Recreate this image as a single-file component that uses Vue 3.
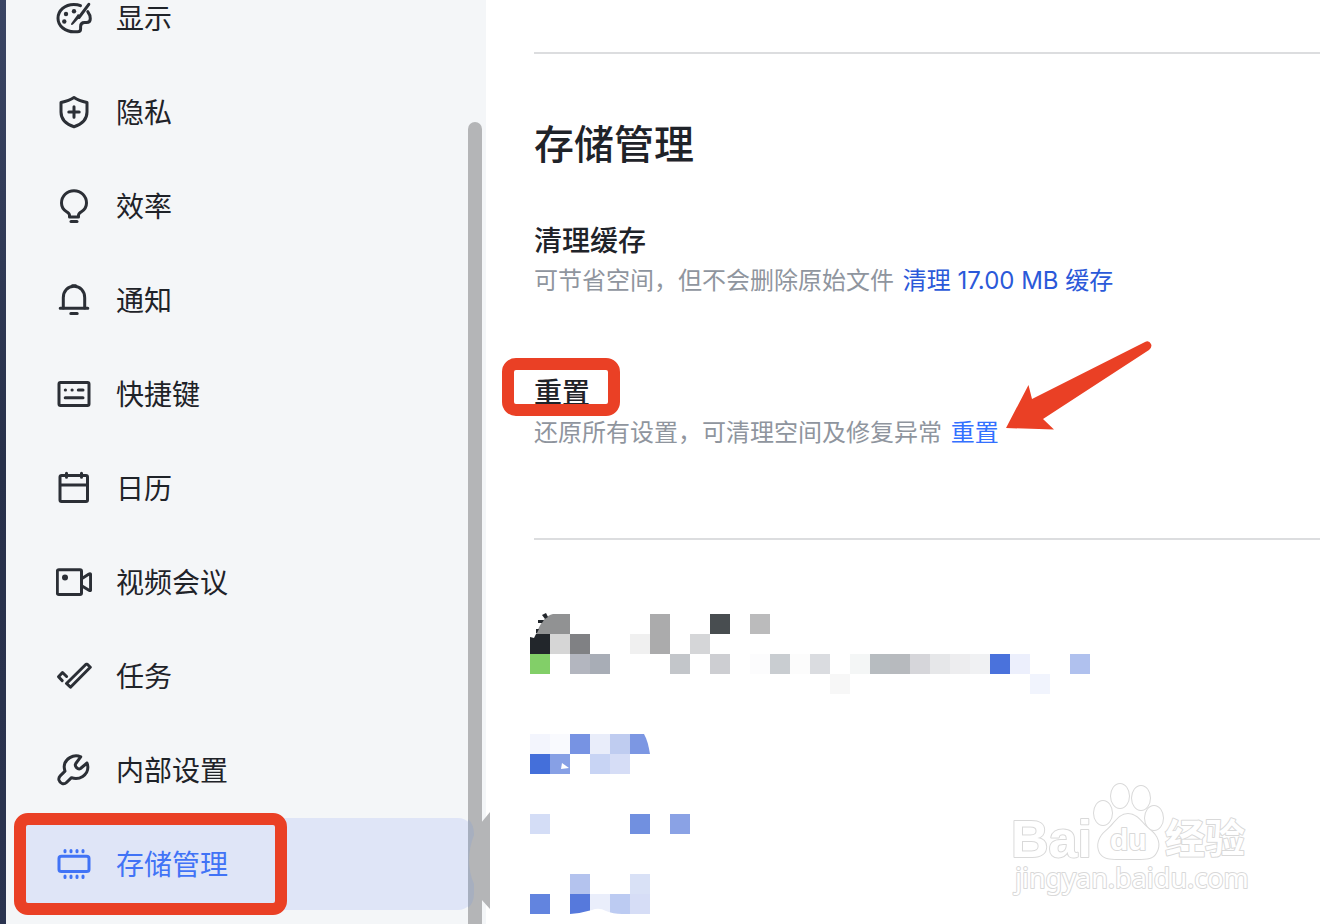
<script setup>
import { ref } from "vue";

const active = ref("storage");

const menu = [
    { id: "display", label: "显示" },
    { id: "privacy", label: "隐私" },
    { id: "efficiency", label: "效率" },
    { id: "notify", label: "通知" },
    { id: "shortcut", label: "快捷键" },
    { id: "calendar", label: "日历" },
    { id: "meeting", label: "视频会议" },
    { id: "task", label: "任务" },
    { id: "internal", label: "内部设置" },
    { id: "storage", label: "存储管理" }
];

// stroke paths, drawn on a 36x36 grid
const icons = {
    display: [
        "M24.5 5.6C22.4 4.7 20 4.4 17.8 4.4C9 4.4 2 10.600 2 18.200C2 26.200 9.500 31.800 18 31.800H21.500C23.600 31.800 24.600 30.600 24.600 29V26.500C24.600 23.800 26 22.500 28.500 22.500H30.500C33 22.500 34.300 21 34.300 18.800C34.300 16 33.400 13.700 31.800 11.700",
        "M32.800 4.300L23 17.500"
    ],
    privacy: ["M18 3.500C22 6.200 26.500 7.500 31 8.500V18C31 25 26 30.200 18 32.700C10 30.200 5 25 5 18V8.500C9.500 7.500 14 6.200 18 3.500Z", "M18 12.800V23.200M12.800 18H23.200"],
    efficiency: ["M13.500 29V27.200C13.500 25.600 12.500 24.800 10.600 23.700C7.300 21.700 5.500 18.800 5.500 15C5.500 8 11 2.700 18 2.700S30.500 8 30.500 15C30.500 18.800 28.700 21.700 25.400 23.700C23.500 24.800 22.500 25.600 22.500 27.200V29Z", "M15 33.500H21"],
    notify: ["M7.300 26V15.800C7.300 9 11.800 4.300 18 4.300S28.700 9 28.700 15.800V26", "M4.200 26.200H31.800M16.300 3.800H19.700M14.800 31.500H21.200"],
    shortcut: ["M4.500 6.500H31.500Q33 6.500 33 8V28Q33 29.500 31.500 29.500H4.500Q3 29.500 3 28V8Q3 6.500 4.500 6.500Z", "M9.300 14H9.500M16 14H16.200M22.300 14H27M9.200 21.800H27"],
    calendar: ["M5.500 5.600H30Q31.500 5.600 31.500 7V30Q31.500 31.500 30 31.500H5.500Q4 31.500 4 30V7Q4 5.600 5.500 5.600Z", "M4.500 14.900H31M10.500 3.300V7.300M25.500 3.300V7.300"],
    meeting: ["M2.800 5.800H24Q25.500 5.800 25.500 7.300V29Q25.500 30.500 24 30.500H2.800Q1.300 30.500 1.300 29V7.300Q1.300 5.800 2.800 5.800Z", "M26 14.500L33 10Q34.600 9.200 34.600 11V25.500Q34.600 27.200 33 26.300L26 22"],
    task: ["M31.300 6.300L34.300 9.300L14.500 29.200L10.500 25.500L30 6.300Z", "M6.200 22.600L2.500 18.800L6.500 14.500L10.600 18.500"],
    internal: ["M24.700 4.800C17.500 1.500 8.500 7 8.200 14.500C8.100 16.200 8.600 17.600 9 19.200L4.200 23.800C2.800 25.200 2.600 26.600 3 28.200C4 31.700 8 33 10.500 30.500L15.500 25.700C23 28.700 32.500 23 31.800 14.500C31.700 13.300 31.500 12.200 31 11L24.500 16.500C22 18 18 14.200 19.800 11.500Z"],
    storage: ["M5.500 10.300H30.500Q33 10.300 33 12.500V23.500Q33 25.500 30.500 25.500H5.500Q3 25.500 3 23.500V12.500Q3 10.300 5.500 10.300Z", "M9 4.500V5.800M15 4.500V5.800M21 4.500V5.800M27 4.500V5.800M9 30V31.500M15 30V31.500M21 30V31.500M27 30V31.500"]
};

// [column, row, colour] of the blurred-out blocks
const blocks = [
    [6, 0, "#ababac"], [9, 0, "#484d50"], [11, 0, "#bbbbbc"],
    [0, 1, "#22262b"], [1, 1, "#d6d6d6"], [2, 1, "#808184"], [5, 1, "#f0f0f0"], [6, 1, "#ababac"], [8, 1, "#d5d6d8"],
    [0, 2, "#82cf68"], [2, 2, "#b3b6bf"], [3, 2, "#a8adb6"], [7, 2, "#c3c6ca"], [9, 2, "#cdced2"], [11, 2, "#fcfcfd"],
    [12, 2, "#c9cdd1"], [13, 2, "#fcfcfc"], [14, 2, "#dadce0"], [16, 2, "#f4f6f6"], [17, 2, "#b7bcc0"], [18, 2, "#b7babe"],
    [19, 2, "#d6d6da"], [20, 2, "#e6e7e9"], [21, 2, "#ededef"], [22, 2, "#f0f1f3"], [23, 2, "#4a72dc"], [24, 2, "#eceffc"], [27, 2, "#b0c1ee"],
    [15, 3, "#f7f7f7"], [25, 3, "#f1f4fd"],
    [0, 6, "#f3f5fd"], [1, 6, "#f9fafe"], [2, 6, "#7793e3"], [3, 6, "#e9edfa"], [4, 6, "#bfccf0"],
    [0, 7, "#446fda"], [1, 7, "#87a0e5"], [3, 7, "#c8d4f4"], [4, 7, "#d6ddf6"],
    [0, 10, "#d4ddf6"], [5, 10, "#7190e0"], [7, 10, "#8aa2e5"],
    [2, 13, "#b4c3ee"], [5, 13, "#d9e1f6"],
    [0, 14, "#6284df"], [2, 14, "#5679dc"], [3, 14, "#eaeefb"], [4, 14, "#bccbf2"], [5, 14, "#d6ddf6"]
];
</script>

<template>
    <div class="settings">
        <aside class="sidebar">
            <nav class="menu">
                <a
                    v-for="item in menu"
                    :key="item.id"
                    href="#"
                    class="menu-item"
                    :class="{ active: item.id === active }"
                    @click.prevent="active = item.id"
                >
                    <svg class="icon" viewBox="0 0 36 36" aria-hidden="true">
                        <path v-for="d in icons[item.id]" :key="d" :d="d" />
                        <g v-if="item.id === 'display'" class="solid">
                            <circle cx="10" cy="14" r="2.2" />
                            <circle cx="18" cy="11.300" r="2.2" />
                            <circle cx="8.300" cy="21.500" r="2.2" />
                            <path d="M22 14L25 16L17.500 24Q15.800 25.500 15 24.500Q14.800 24 15.500 23Z" />
                        </g>
                        <circle v-if="item.id === 'meeting'" class="solid" cx="9" cy="13.500" r="3" />
                    </svg>
                    <span class="label">{{ item.label }}</span>
                    <span v-if="item.id === 'storage'" class="mark mark-menu"></span>
                </a>
            </nav>
            <div class="scrollbar"></div>
            <svg class="bulge" viewBox="0 0 24 100" aria-hidden="true">
                <path fill="#a7afbf" d="M2 8Q8 13 8 24V82Q8 92 2 97Z" />
                <path fill="#b4b5b7" d="M8 24Q-2 50 8 73Z" />
                <path fill="#b4b5b7" d="M15 12L24 1V98L15 88Z" />
            </svg>
        </aside>

        <main class="content">
            <section class="panel">
                <h2>存储管理</h2>
                <div class="row">
                    <h3>清理缓存</h3>
                    <p>可节省空间，但不会删除原始文件 <a href="#" class="hovered" @click.prevent>清理 17.00 MB 缓存</a></p>
                </div>
                <div class="row">
                    <h3><span class="marked">重置<span class="mark mark-title"></span></span></h3>
                    <p>
                        还原所有设置，可清理空间及修复异常
                        <a href="#" @click.prevent>重置<svg class="arrow" viewBox="0 0 150 92" aria-hidden="true"><path d="M1 88L23.500 45L27 59L140 2Q144 0 146 4Q147.500 7 144 10L38 79L49 89.500Z" /></svg></a>
                    </p>
                </div>
            </section>
            <section class="panel">
                <svg class="mosaic" width="560" height="300" viewBox="0 0 560 300" aria-hidden="true">
                    <rect v-for="(b, i) in blocks" :key="i" :x="b[0] * 20" :y="b[1] * 20" width="20" height="20" :fill="b[2]" />
                    <path fill="#919293" d="M6 20Q13 2 23 0H40V20Z" />
                    <path fill="#22262b" d="M12 1L16 -1L18 3L15 5ZM8 6H14L12 9H8ZM6 15H9L7 19H6Z" />
                    <path fill="#fff" d="M0 20H6L4 24L0 23Z" />
                    <path fill="#7c97e3" d="M100 120H114Q118 127 120 140H100Z" />
                    <path fill="#fff" d="M32 149L39 154L31 155Z" />
                    <path fill="#fff" d="M40 300Q52 299 62 296Q69 293 76 297Q83 300 92 300V301H40Z" />
                </svg>
            </section>
        </main>

        <svg class="watermark" width="250" height="120" viewBox="0 0 250 120" aria-hidden="true">
            <g class="paw">
                <ellipse cx="98" cy="34" rx="9" ry="12" />
                <ellipse cx="115" cy="17" rx="9" ry="12" />
                <ellipse cx="136" cy="19" rx="9" ry="12" />
                <ellipse cx="149" cy="39" rx="9" ry="12" />
                <path d="M123 35C133 35 137 45 145 51C153 57 156 66 151 74C147 81 140 80 123 80S100 81 95 74C91 66 94 58 101 52C110 45 113 35 123 35Z" />
            </g>
            <text class="brand" x="6" y="78">Bai</text>
            <text class="du" x="105" y="71">du</text>
            <text class="cn" x="160" y="74">经验</text>
            <text class="site" x="10" y="109">jingyan.baidu.com</text>
        </svg>
    </div>
</template>

<style>
body {
    margin: 0;
    background: #fff;
}
</style>

<style scoped>
.settings {
    position: relative;
    display: flex;
    min-height: 100vh;
    overflow: hidden;
    background: #fff;
    color: #1f2329;
    font-family: Inter, "Noto Sans CJK SC", sans-serif;
}

.settings::before {
    content: "";
    flex: 0 0 6px;
    background: linear-gradient(#3a4564, #27304a 50%, #2b3450);
}

.sidebar {
    position: relative;
    flex: 0 0 480px;
    background: #f4f6f8;
}

/* the list is scrolled, its first row is cut by the window edge */
.menu {
    display: flex;
    flex-direction: column;
    gap: 2px;
    margin: -28px 12px 0 16px;
}

.menu-item {
    position: relative;
    display: flex;
    align-items: center;
    gap: 24px;
    height: 92px;
    padding-left: 34px;
    border-radius: 16px;
    color: #1f2329;
    font-size: 28px;
    text-decoration: none;
}

.menu-item.active {
    background: #dfe5f7;
    color: #4173f6;
}

.label {
    padding-bottom: 2px;
}

.icon {
    width: 36px;
    height: 36px;
    fill: none;
    stroke: #2b2f36;
    stroke-width: 3;
    stroke-linecap: round;
    stroke-linejoin: round;
}

.active .icon {
    stroke: currentColor;
}

.icon .solid {
    fill: #2b2f36;
    stroke: none;
}

.scrollbar {
    position: absolute;
    top: 122px;
    right: 4px;
    bottom: 0;
    width: 14px;
    border-radius: 7px 7px 0 0;
    background: #b4b5b7;
}

.bulge {
    position: absolute;
    top: 811px;
    right: -4px;
    width: 24px;
    height: 100px;
}

.mark {
    position: absolute;
    box-sizing: border-box;
    border: 12px solid #ea4025;
    border-radius: 14px;
    pointer-events: none;
}

.mark-menu {
    top: -5px;
    left: -8px;
    width: 273px;
    height: 102px;
}

.mark-title {
    top: -18px;
    left: -32px;
    width: 118px;
    height: 58px;
}

.content {
    flex: 1;
    min-width: 0;
    padding: 52px 0 0 48px;
}

.panel {
    border-top: 2px solid #dcdddf;
}

h2 {
    margin: 63px 0 48px;
    font-size: 40px;
    font-weight: 500;
    line-height: 56px;
}

.row {
    margin-bottom: 72px;
}

.row:last-child {
    margin-bottom: 85px;
}

h3 {
    margin: 0;
    font-size: 28px;
    font-weight: 500;
    line-height: 40px;
}

p {
    margin: 0;
    color: #8f959e;
    font-size: 24px;
    line-height: 40px;
}

p a {
    position: relative;
    margin-left: 2px;
    color: #3370ff;
    text-decoration: none;
}

p a.hovered {
    color: #2b59d9;
}

.marked {
    position: relative;
}

.arrow {
    position: absolute;
    bottom: 15px;
    left: calc(100% + 6px);
    width: 150px;
    height: 92px;
    fill: #ea4025;
}

.mosaic {
    display: block;
    margin: 74px 0 0 -4px;
    overflow: visible;
}

.watermark {
    position: absolute;
    right: 65px;
    bottom: 25px;
    fill: #fff;
    stroke: #d9d9d9;
    stroke-width: 2;
    stroke-linejoin: round;
    paint-order: stroke;
}

.brand {
    font: bold 52px "Liberation Sans", sans-serif;
}

.du {
    font: bold 30px "Liberation Sans", sans-serif;
}

.cn {
    font: bold 40px "Noto Sans CJK SC", sans-serif;
}

.site {
    font: 27px "Noto Sans", sans-serif;
}
</style>
